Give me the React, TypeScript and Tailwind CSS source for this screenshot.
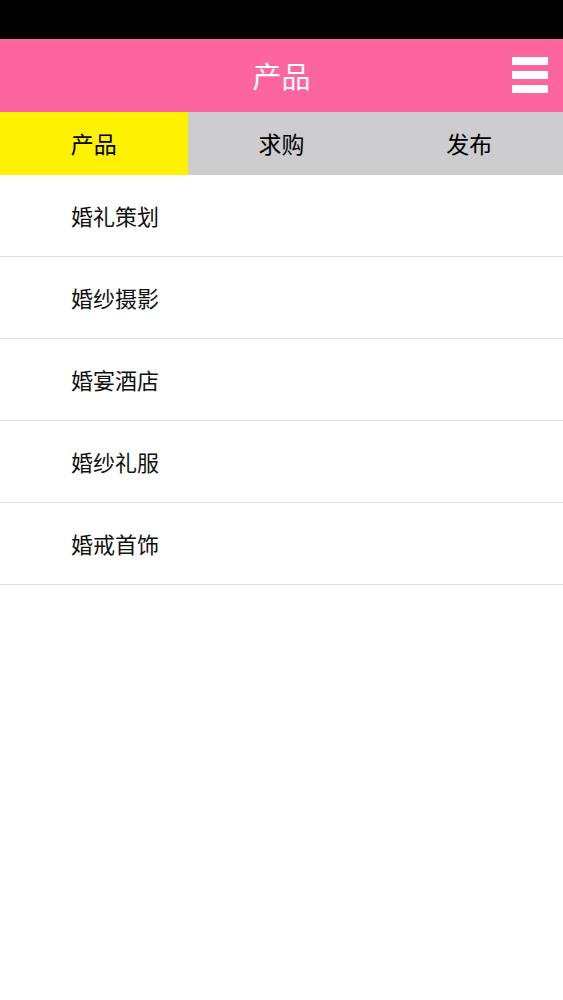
import React from 'react';

const items = ['婚礼策划', '婚纱摄影', '婚宴酒店', '婚纱礼服', '婚戒首饰'];
const tabs = ['产品', '求购', '发布'];

const App: React.FC = () => {
  return (
    <div
      className="min-h-[1000px] bg-white"
      style={{ fontFamily: '"Noto Sans CJK SC", "Noto Sans", sans-serif' }}
    >
      <div className="h-[39px] bg-black" />
      <header className="relative h-[73px] bg-[#fd659f] flex items-center justify-center">
        <h1 className="text-[29px] text-white leading-none">产品</h1>
        <button className="absolute right-[15px] top-[18px] flex flex-col gap-[6px]">
          <span className="block w-[36px] h-[8px] bg-white" />
          <span className="block w-[36px] h-[8px] bg-white" />
          <span className="block w-[36px] h-[8px] bg-white" />
        </button>
      </header>
      <nav className="grid grid-cols-3 h-[63px] bg-[#cdccce]">
        {tabs.map((t, i) => (
          <div
            key={t}
            className={`flex items-center justify-center text-[23px] text-black ${i === 0 ? 'bg-[#fff200]' : ''}`}
          >
            {t}
          </div>
        ))}
      </nav>
      <ul>
        {items.map((item) => (
          <li
            key={item}
            className="h-[82px] flex items-center pl-[71px] border-b border-[#e2e2e2] text-[22px] text-[#111]"
          >
            {item}
          </li>
        ))}
      </ul>
    </div>
  );
};

export default App;
